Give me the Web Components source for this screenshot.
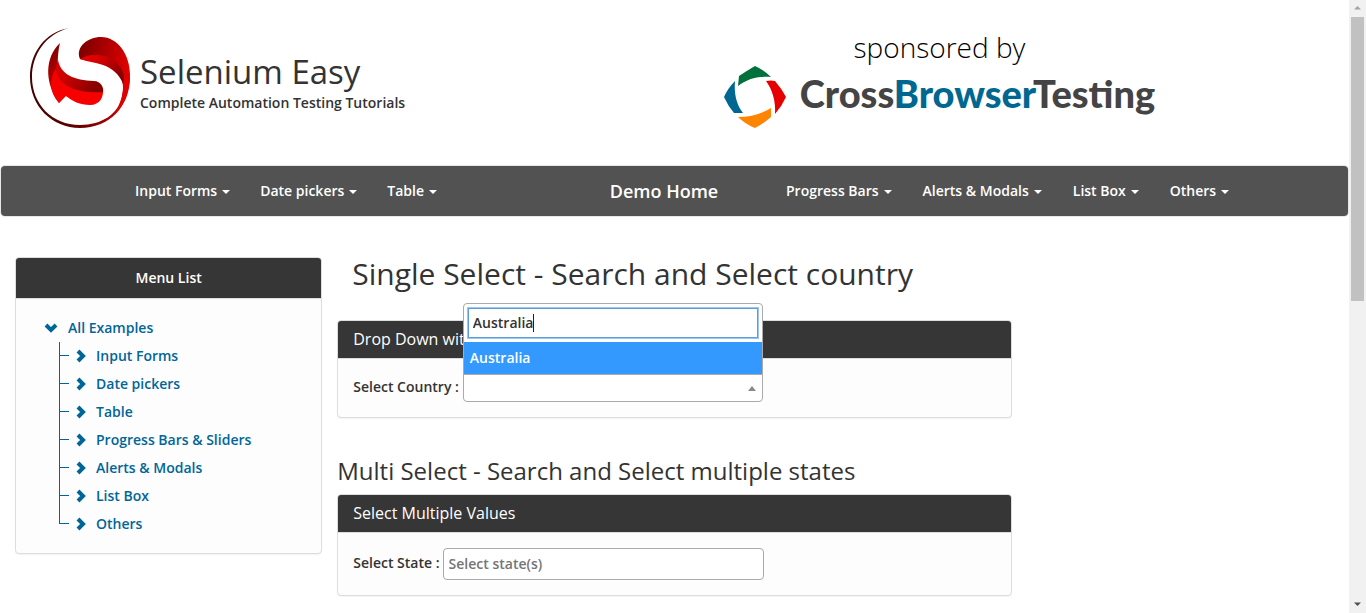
<!DOCTYPE html>
<html lang="en">
<head>
<meta charset="utf-8">
<title>Selenium Easy - Demo</title>
<style>
  html, body { margin: 0; height: 100%; }
  body {
    font-family: "Open Sans", Arial, sans-serif;
    font-size: 14px;
    font-weight: 600;
    line-height: 20px;
    color: #333;
    background: #fff;
    overflow: hidden;
    --dark: #363636;
    --link: #006699;
    --line: #ddd;
  }
</style>
</head>
<body>
<page-shell>
  <site-header></site-header>
  <nav-bar></nav-bar>
  <page-columns>
    <side-menu slot="side"></side-menu>
    <section-title level="2">Single Select - Search and Select country</section-title>
    <titled-panel heading="Drop Down with"><country-select></country-select></titled-panel>
    <section-title level="3">Multi Select - Search and Select multiple states</section-title>
    <titled-panel heading="Select Multiple Values"><state-select></state-select></titled-panel>
  </page-columns>
</page-shell>

<script>
const define = (name, html, setup) => {
  const template = document.createElement('template');
  template.innerHTML = html;
  customElements.define(name, class extends HTMLElement {
    constructor() {
      super();
      this.attachShadow({ mode: 'open' }).append(template.content.cloneNode(true));
    }
    connectedCallback() { if (setup) setup(this, this.shadowRoot); }
  });
};

define('scroll-track', `
<style>
  :host { display: flex; flex-direction: column; background: #f1f1f1; padding: 0 2px; }
  svg { width: 13px; height: 17px; flex: none; }
  .track { flex: 1; }
  .thumb { height: 49%; background: #c1c1c1; min-height: 17px; }
</style>
<svg viewBox="0 0 13 17"><path d="M3 9.500 6.500 6 10 9.500z" fill="#a3a3a3"/></svg>
<div class="track"><div class="thumb"></div></div>
<svg viewBox="0 0 13 17"><path d="M3 6.500 6.500 10 10 6.500z" fill="#505050"/></svg>`);

define('page-shell', `
<style>
  :host { display: grid; grid-template-columns: minmax(0, 1fr) 17px; height: 100%; }
  main { overflow: hidden; min-height: 0; }
</style>
<main><slot></slot></main><scroll-track></scroll-track>`);

define('site-header', `
<style>
  :host { display: grid; grid-template-columns: 1fr 1fr; height: 166px; }
  a { color: inherit; text-decoration: none; }
  .brand { display: flex; align-items: flex-start; gap: 10px; padding: 28px 0 0 30px; }
  .brand svg { width: 100px; height: 100px; flex: none; }
  .words { padding-top: 22px; }
  h1 { margin: 0; font-size: 33px; font-weight: 400; line-height: 43px; }
  p { margin: 0; line-height: 20px; }
  .sponsor { display: flex; flex-direction: column; align-items: center; width: 430px; padding: 28px 0 0 50px; }
  .by { font-size: 28px; font-weight: 300; line-height: 38px; color: #000; }
  .cbt { display: flex; align-items: flex-start; gap: 14px; font: 900 38px/54px Lato, sans-serif; color: #444; white-space: nowrap; }
  .cbt svg { width: 62px; height: 62px; flex: none; }
  .cbt b { font-weight: 900; color: #006890; }
</style>
<a class="brand" href="#">
  <svg viewBox="0 0 100 100" aria-hidden="true">
    <defs>
      <linearGradient id="ring" x1="0" y1="0" x2="1" y2="0"><stop offset="0" stop-color="#400"/><stop offset=".5" stop-color="#600"/><stop offset="1" stop-color="#d80000"/></linearGradient>
      <linearGradient id="top" x1="0" y1="0" x2="1" y2=".3"><stop offset="0" stop-color="#700"/><stop offset=".4" stop-color="#a00000"/><stop offset="1" stop-color="#e00000"/></linearGradient>
      <linearGradient id="mid" x1="0" y1="0" x2="1" y2=".6"><stop offset="0" stop-color="#f00000"/><stop offset=".45" stop-color="#d00000"/><stop offset="1" stop-color="#800"/></linearGradient>
      <linearGradient id="left" x1="0" y1="0" x2=".3" y2="1"><stop offset="0" stop-color="#700"/><stop offset="1" stop-color="#d80000"/></linearGradient>
      <linearGradient id="low" x1="0" y1="0" x2="1" y2=".5"><stop offset="0" stop-color="#e00000"/><stop offset=".5" stop-color="#c00000"/><stop offset="1" stop-color="#800"/></linearGradient>
    </defs>
    <path fill="url(#ring)" d="M39 0C15 4 0 25 0 49c0 29 22 51 50 51 29 0 50-21 50-51l-6-1c1 6-1 15-2 21-4 17-20 28-42 28C22 97 2 76 2 49 2 26 16 6 39 0z"/>
    <path fill="url(#top)" d="M50 31C45 19 58 9 71 9c17 0 29 18 29 38 0 15-6 30-16 40 6-10 9-20 9-28 0-12-8-20-18-23-9-4-17-3-25-5z"/>
    <path fill="url(#mid)" d="M50 31c9-5 21-6 31 0 11 6 15 16 12 25-3-9-11-16-20-19-8-3-16-3-23-6z"/>
    <path fill="url(#left)" d="M30 15C15 29 14 54 29 75l8-10C27 54 26 32 30 15z"/>
    <path fill="#f60000" d="M26 40c6 17 22 24 43 23l4-3c1 9-3 17-13 17-10 0-18-4-24-9l-7 7C19 64 19 52 26 40z"/>
    <path fill="url(#low)" d="M28 32c3 15 16 20 36 21 7 0 10 7 9 11-20 2-45-4-47-22 0-3 1-7 2-10z"/>
  </svg>
  <div class="words"><h1>Selenium Easy</h1><p>Complete Automation Testing Tutorials</p></div>
</a>
<a class="sponsor" href="#">
  <span class="by">sponsored by</span>
  <span class="cbt">
    <svg viewBox="0 0 62 62" aria-hidden="true">
      <path fill="#00703c" d="M15 10Q24 4 31 0q9 4 16 11C35 10 23 13 14 20z"/>
      <path fill="#e60000" d="M42 15q5-1 9 0 7 8 11 16-4 9-11 17c1-13-3-25-9-33z"/>
      <path fill="#ff8400" d="M14 51c13 0 23-3 33-9v9q-8 7-16 11-10-4-17-11z"/>
      <path fill="#006890" d="M11 15Q4 22 0 31q4 9 10 16h9C12 38 10 27 11 15z"/>
    </svg>
    <span>Cross<b>Browser</b>Testing</span>
  </span>
</a>`);

define('nav-item', `
<style>
  :host { display: block; }
  a { display: flex; align-items: center; gap: 5px; padding: 15px; color: #fff; text-decoration: none; white-space: nowrap; }
  i { border: 4px solid transparent; border-top-color: #fff; border-bottom: 0; margin-top: 2px; }
</style>
<a href="#"><slot></slot><i></i></a>`);

define('nav-bar', `
<style>
  :host { display: grid; grid-template-columns: minmax(0, 556fr) 214fr 577fr; align-items: center; height: 50px; margin: 0 1px; background: #525252; border-radius: 4px; box-shadow: 0 0 0 1px #e7e7e7; }
  div { display: flex; }
  .l { padding-left: 119px; }
  .r { gap: 1px; }
  .home { justify-self: center; font-size: 18px; color: #fff; text-decoration: none; }
</style>
<div class="l"><nav-item>Input Forms</nav-item><nav-item>Date pickers</nav-item><nav-item>Table</nav-item></div>
<a class="home" href="#">Demo Home</a>
<div class="r"><nav-item>Progress Bars</nav-item><nav-item>Alerts &amp; Modals</nav-item><nav-item>List Box</nav-item><nav-item>Others</nav-item></div>`);

define('page-columns', `
<style>
  :host { display: grid; grid-template-columns: 25% 50%; padding-top: 41px; align-items: start; }
  .side { padding: 0 15px; }
  .content { display: flex; flex-direction: column; }
</style>
<div class="side"><slot name="side"></slot></div>
<div class="content"><slot></slot></div>`);

define('side-menu', `
<style>
  :host { display: block; background: #fdfdfd; border: 1px solid var(--line); border-radius: 4px; box-shadow: 0 1px 1px rgba(0,0,0,.05); overflow: hidden; }
  h2 { margin: 0; padding: 10px; background: var(--dark); color: #fff; border-bottom: 1px solid var(--line); font-size: 14px; font-weight: 600; line-height: 20px; text-align: center; }
  a { display: flex; align-items: center; gap: 10px; height: 28px; color: var(--link); text-decoration: none; }
  .tree { padding: 15px 28px; }
  ul { list-style: none; margin: 0; padding: 0 0 0 15px; }
  li { display: grid; grid-template-columns: 15px 1fr; }
  li::before { content: ""; border: solid var(--link); border-width: 0 0 1px 1px; width: 9px; height: 27px; margin-top: -14px; }
  li:first-child::before { height: 13px; margin-top: 0; }
  svg { width: 14px; height: 14px; fill: none; stroke: var(--link); stroke-width: 4; }
  li a { gap: 8px; }
</style>
<h2>Menu List</h2>
<div class="tree">
  <a href="#"><svg viewBox="0 0 14 14"><path d="M2 4l5 5 5-5"/></svg>All Examples</a>
  <ul></ul>
</div>`, (host, root) => {
  for (const text of ['Input Forms', 'Date pickers', 'Table', 'Progress Bars & Sliders', 'Alerts & Modals', 'List Box', 'Others']) {
    const li = document.createElement('li');
    li.innerHTML = '<a href="#"><svg viewBox="0 0 14 14"><path d="M4 2l5 5-5 5"/></svg><span></span></a>';
    li.querySelector('span').textContent = text;
    root.querySelector('ul').append(li);
  }
});

define('section-title', `
<style>
  :host { display: block; }
  h2, h3 { margin: 0; font-weight: 400; }
  h2 { font-size: 30px; line-height: 34px; padding: 0 15px 29px; }
  h3 { font-size: 24px; line-height: 26px; padding: 40px 0 10px; }
</style>`, (host, root) => {
  const h = document.createElement('h' + host.getAttribute('level'));
  h.append(document.createElement('slot'));
  root.append(h);
});

define('titled-panel', `
<style>
  :host { display: block; background: #fdfdfd; border: 1px solid var(--line); border-radius: 4px; box-shadow: 0 1px 1px rgba(0,0,0,.05); }
  header { background: var(--dark); color: #fff; border-bottom: 1px solid var(--line); border-radius: 3px 3px 0 0; padding: 8px 15px; font-size: 16px; font-weight: 400; line-height: 21px; }
  div { padding: 15px; }
</style>
<header></header><div><slot></slot></div>`, (host, root) => {
  root.querySelector('header').textContent = host.getAttribute('heading');
});

define('country-select', `
<style>
  :host { display: flex; align-items: flex-start; gap: 4px; }
  label { padding-top: 3px; }
  .box { position: relative; width: 300px; }
  button { display: flex; justify-content: flex-end; align-items: center; box-sizing: border-box; width: 100%; height: 28px; padding: 0 6px; background: #fff; border: 1px solid #aaa; border-radius: 0 0 4px 4px; }
  i { border: 4px solid transparent; border-bottom: 5px solid #888; border-top: 0; }
  .drop { position: absolute; box-sizing: border-box; left: 0; right: 0; bottom: calc(100% - 1px); background: #fff; border: 1px solid #aaa; border-radius: 4px 4px 0 0; }
  .search { padding: 4px; }
  input { display: block; box-sizing: border-box; width: 100%; height: 30px; padding: 3px 4px 5px; font: inherit; color: inherit; border: 1px solid #5a9ddb; outline: 1px solid #9cc8f5; background: #fff; }
  .field { position: relative; }
  .field::after { content: ""; position: absolute; left: 65px; top: 6px; width: 1px; height: 18px; background: #222; }
  ul { list-style: none; margin: 0; padding: 0; }
  li { padding: 6px; background: #3399ff; color: #fff; }
</style>
<label for="country">Select Country :</label>
<div class="box">
  <div class="drop">
    <div class="search"><div class="field"><input type="text" aria-label="Search country" value="Australia"></div></div>
    <ul role="listbox"><li role="option" aria-selected="true">Australia</li></ul>
  </div>
  <button id="country" type="button" aria-label="Select Country"><i></i></button>
</div>`);

define('state-select', `
<style>
  :host { display: flex; align-items: flex-start; gap: 3px; }
  label { padding-top: 5px; }
  input { box-sizing: border-box; width: 321px; height: 32px; padding: 0 5px 2px; font: inherit; border: 1px solid #aaa; border-radius: 4px; background: #fff; }
  input::placeholder { color: #757575; opacity: 1; }
</style>
<label for="state">Select State :</label>
<input id="state" type="text" placeholder="Select state(s)">`);
</script>
</body>
</html>
